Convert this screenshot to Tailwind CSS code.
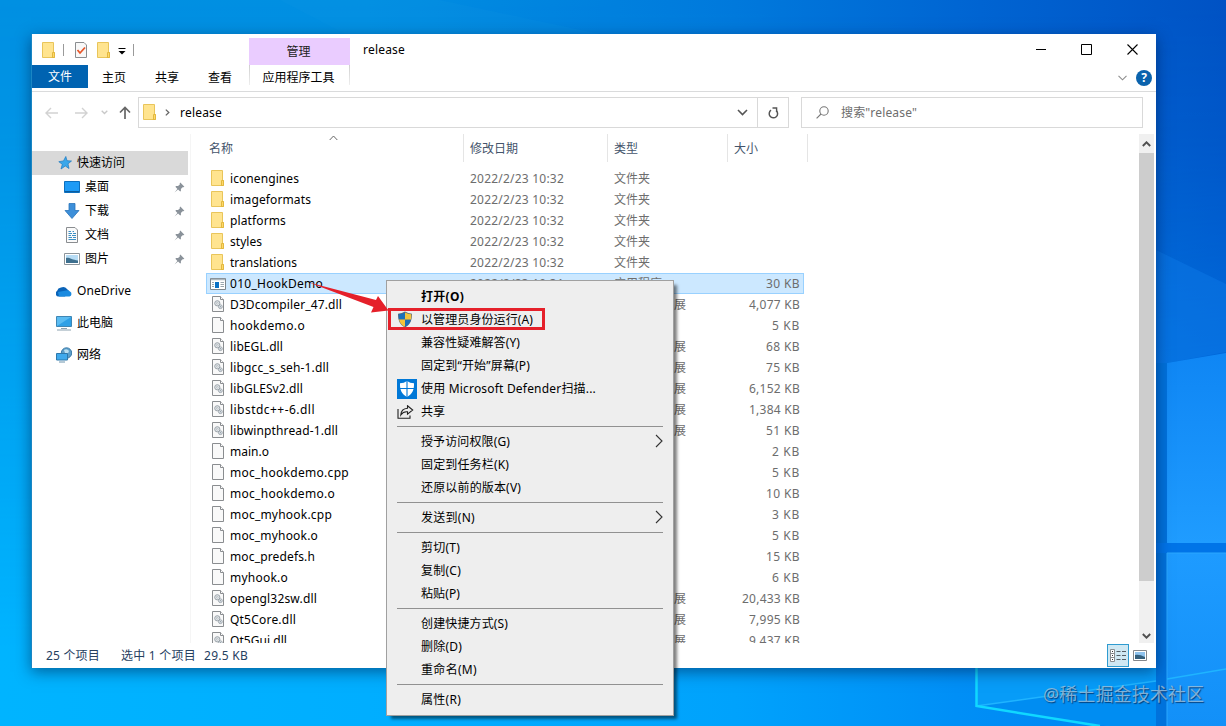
<!DOCTYPE html>
<html lang="zh-CN">
<head>
<meta charset="utf-8">
<title>release</title>
<script src="https://cdn.jsdelivr.net/npm/@tailwindcss/browser@4"></script>
</head>
<body class="relative w-[1226px] h-[726px] overflow-hidden bg-[#0090f0] font-['Noto_Sans','Noto_Sans_CJK_SC',sans-serif] text-[12px] leading-[20px] text-black">

<!-- desktop wallpaper -->
<svg class="absolute inset-0" width="1226" height="726" viewBox="0 0 1226 726">
  <defs>
    <linearGradient id="top" x1="0" x2="1" y1="0" y2="0"><stop offset="0" stop-color="#0090e2"/><stop offset=".3" stop-color="#008fe2"/><stop offset=".6" stop-color="#0079dc"/><stop offset=".8" stop-color="#0064d2"/><stop offset="1" stop-color="#0052c4"/></linearGradient>
    <linearGradient id="bot" x1="0" x2="1" y1="0" y2="0"><stop offset="0" stop-color="#00b4ff"/><stop offset=".3" stop-color="#00aeff"/><stop offset=".6" stop-color="#00a2fc"/><stop offset=".78" stop-color="#008ff6"/><stop offset="1" stop-color="#0080f0"/></linearGradient>
    <linearGradient id="fade" x1="0" x2="0" y1="0" y2="1"><stop offset="0" stop-color="#000"/><stop offset=".2" stop-color="#222"/><stop offset=".9" stop-color="#fff"/></linearGradient>
    <mask id="m"><rect width="1226" height="726" fill="url(#fade)"/></mask>
    <linearGradient id="pane" x1="0" x2="0" y1="0" y2="1"><stop offset="0" stop-color="#0f86f4"/><stop offset="1" stop-color="#1f9cff"/></linearGradient>
    <linearGradient id="pane2" x1="0" x2="0" y1="0" y2="1"><stop offset="0" stop-color="#1e9bff"/><stop offset="1" stop-color="#1290f8"/></linearGradient>
  </defs>
  <rect width="1226" height="726" fill="url(#top)"/>
  <rect width="1226" height="726" fill="url(#bot)" mask="url(#m)"/>
  <path d="M280 0L345 34H600L440 0Z" fill="#18a0ea" opacity=".12"/>
  <path d="M1156 250L1226 284V352L1167 363H1156Z" fill="#1080ee" opacity=".35"/>
  <path d="M1167 363L1226 353V543H1167Z" fill="url(#pane)"/>
  <path d="M1156 363H1167V726H1156Z" fill="#0072dc"/>
  <path d="M1156 543H1226V553H1156Z" fill="#0074e8"/>
  <path d="M1167 553H1226V726H1167Z" fill="url(#pane2)"/>
  <path d="M1167 553V726M1167 553H1226" stroke="#2ba8ff" fill="none"/>
  <path d="M976 660H1156V726H1110L976 706Z" fill="#079cf8"/>
  <path d="M976 706L1156 681V726H1110Z" fill="#008df2"/>
  <path d="M976 706L1156 681M1167 679L1226 669" stroke="#1fb4ff" stroke-width="1.500" fill="none"/>
  <path d="M976.500 660V706L1100 726" stroke="#10d8ff" stroke-width="2.500" fill="none"/>
</svg>

<!-- shared symbols -->
<svg class="absolute" width="0" height="0">
  <symbol id="folder" viewBox="0 0 14 16"><path d="M.5.500H11.500V10.500H12.500V15.500H.5Z" fill="#ffe48f" stroke="#e9c55a"/><path d="M10.500 15V10.500H12.500V15.500H10Z" fill="#ffd968" stroke="#e2b840"/></symbol>
  <symbol id="file" viewBox="0 0 13 16"><path d="M.5.500H8.500L11.500 3.500V15.500H.5Z" fill="#f9f9f9" stroke="#8a8d90"/><path d="M8.500.500V3.500H11.500" fill="#fff" stroke="#8a8d90"/></symbol>
  <symbol id="dll" viewBox="0 0 13 16"><path d="M.5.500H8.500L11.500 3.500V15.500H.5Z" fill="#f9f9f9" stroke="#8a8d90"/><path d="M8.500.500V3.500H11.500" fill="#fff" stroke="#8a8d90"/><circle cx="5.300" cy="7.300" r="2.600" fill="#e4e9ed" stroke="#9aa2a8" stroke-width="1"/><circle cx="5.300" cy="7.300" r=".9" fill="#fff" stroke="#9aa2a8" stroke-width=".6"/><circle cx="8.400" cy="10.700" r="1.900" fill="#dfe6ec" stroke="#9aa2a8" stroke-width=".9"/><circle cx="8.400" cy="10.700" r=".6" fill="#8f979d"/></symbol>
  <symbol id="exe" viewBox="0 0 16 12"><path d="M.5.500H15.500V11.500H.5Z" fill="#fff" stroke="#7d868d"/><path d="M1 1.500H15" stroke="#aeb7bd" stroke-width="1.500"/><path d="M5 4H9V10H5Z" fill="#0a70c4"/><path d="M2 4.500H4M2 6.500H4M2 8.500H4M10.500 4.500H14M10.500 6.500H14M10.500 8.500H14" stroke="#9aa6ae"/></symbol>
  <symbol id="pin" viewBox="0 0 11 11"><path d="M6.300.600L10.400 4.700L9.300 5.300L8.600 5.200L6.900 7V8.900L6.200 9.600L4.100 7.500L.5 10.500L3.400 6.900L1.400 4.800L2.100 4.100H4L5.800 2.400L5.700 1.500Z" fill="#8a929a"/></symbol>
</svg>

<!-- explorer window -->
<main class="absolute left-[31px] top-[34px] flex h-[634px] w-[1125px] flex-col border-l border-[#1a86c4] bg-white shadow-[0_4px_14px_rgba(0,20,60,0.5)]">

  <!-- title bar and ribbon tabs -->
  <header class="flex h-[58px] flex-none border-b border-[#dadbdc]">
    <div class="flex w-[217px] flex-col">
      <div class="flex h-[31px] items-center pl-[10px]">
        <svg width="14" height="16"><use href="#folder"/></svg>
        <i class="ml-[7px] h-[12px] w-px bg-[#9a9a9a]"></i>
        <svg class="ml-[11px]" width="13" height="16" viewBox="0 0 13 16"><path d="M.5.500H9L11.500 3V15.500H.5Z" fill="#f8f8f8" stroke="#8a8d90"/><path d="M2.500 8L5 11L10 5.500" fill="none" stroke="#e8562a" stroke-width="1.800"/></svg>
        <svg class="ml-[9px]" width="14" height="16"><use href="#folder"/></svg>
        <svg class="ml-[7px] mt-[3px]" width="8" height="7"><path d="M.5 .5H7.500" stroke="#000"/><path d="M.5 3H7.500L4 6.500Z"/></svg>
        <i class="ml-[7px] h-[12px] w-px bg-[#9a9a9a]"></i>
      </div>
      <nav class="flex h-[23px]">
        <b class="w-[56px] bg-[#0063b1] text-center font-normal leading-[24px] text-white">文件</b>
        <span class="ml-[14px] leading-[26px]">主页</span>
        <span class="ml-[29px] leading-[26px]">共享</span>
        <span class="ml-[29px] leading-[26px]">查看</span>
      </nav>
    </div>
    <div class="mt-[4px] w-[101px] text-center">
      <div class="h-[27px] bg-[#eaccff] pr-[2px] leading-[27px] text-[#222]">管理</div>
      <div class="flex h-[20px] justify-between">
        <i class="w-px bg-linear-to-b from-[#cfcfcf] to-[#eeeeee]"></i><span class="pr-[2px] leading-[26px]">应用程序工具</span><i class="w-px bg-linear-to-b from-[#cfcfcf] to-[#eeeeee]"></i>
      </div>
    </div>
    <span class="ml-[13px] mt-[6px]"><span data-w="42">release</span></span>
    <div class="ml-auto flex flex-col">
      <div class="flex h-[31px] items-center gap-[35px] pr-[18px]">
        <svg width="10" height="11"><path d="M0 5.500H10" stroke="#000"/></svg>
        <svg width="11" height="11"><path d="M.5 .5H10.500V10.500H.5Z" fill="none" stroke="#000"/></svg>
        <svg width="11" height="11"><path d="M.5 .5L10.500 10.500M10.500 .5L.5 10.500" stroke="#000" stroke-width="1.100"/></svg>
      </div>
      <div class="flex h-[26px] items-center justify-end gap-[9px] pr-[4px]">
        <svg width="9" height="6"><path d="M.5 .8L4.500 4.800L8.500 .8" fill="none" stroke="#8d8d8d" stroke-width="1.100"/></svg>
        <b class="flex size-[16px] items-center justify-center rounded-full bg-[#0b63ad] text-[12px] text-white">?</b>
      </div>
    </div>
  </header>

  <!-- address row -->
  <div class="flex h-[42px] flex-none items-start pt-[5px]">
    <div class="flex h-[31px] w-[106px] items-center pl-[13px]">
      <svg width="13" height="12" fill="none" stroke="#d2d2d2" stroke-width="1.400"><path d="M13 6H1M6 1L1 6L6 11"/></svg>
      <svg class="ml-[17px]" width="13" height="12" fill="none" stroke="#d2d2d2" stroke-width="1.400"><path d="M0 6H12M7 1L12 6L7 11"/></svg>
      <svg class="ml-[13px]" width="7" height="5" fill="none" stroke="#c8c8c8" stroke-width="1.300"><path d="M.7 .7L3.500 3.500L6.300 .7"/></svg>
      <svg class="ml-[11px]" width="12" height="13" fill="none" stroke="#666" stroke-width="1.700"><path d="M6 13V1.500M1 6.500L6 1.500L11 6.500"/></svg>
    </div>
    <div class="flex h-[31px] w-[651px] items-center border border-[#d9d9d9] pl-[4px]">
      <svg class="mb-px" width="14" height="16"><use href="#folder"/></svg>
      <svg class="ml-[8px]" width="5" height="7" fill="none" stroke="#666" stroke-width="1.300"><path d="M.8 .6L3.800 3.500L.8 6.400"/></svg>
      <span class="ml-[10px]"><span data-w="42">release</span></span>
      <svg class="ml-auto mr-[9px]" width="11" height="7" fill="none" stroke="#555" stroke-width="1.600"><path d="M1 1L5.500 5.500L10 1"/></svg>
      <div class="flex h-full w-[31px] items-center justify-center border-l border-[#d9d9d9]">
        <svg width="11" height="12" viewBox="0 0 11 12" fill="none" stroke="#555" stroke-width="1.500"><path d="M8.300 3.600A4.200 4.200 0 1 1 3 3.200"/><path d="M4.500 1H8.600V4.800" stroke-width="1.400"/></svg>
      </div>
    </div>
    <div class="ml-[12px] flex h-[31px] w-[342px] items-center border border-[#d9d9d9] pl-[14px] text-[#6d6d6d]">
      <svg class="mb-px" width="13" height="13" fill="none" stroke="#777" stroke-width="1.100"><circle cx="8" cy="5" r="4.200"/><path d="M5 8L.6 12.400"/></svg>
      <span class="ml-[12px]"><span data-w="76">搜索"release"</span></span>
    </div>
  </div>

  <!-- navigation pane and file list -->
  <div class="flex h-[509px] flex-none">
    <aside class="w-[159px] flex-none border-r border-[#f5f5f5] pt-[17px]">
      <div class="flex h-[24px] w-[156px] items-center bg-[#d9d9d9] pl-[26px]">
        <svg width="14" height="14" viewBox="0 0 14 14"><path d="M7.800.500L9 4.700L13.500 5L10 7.800L11 12.500L7.300 10L3 13L4.300 8.300L.8 5.700L5.500 4.900Z" fill="#3aa7ea" stroke="#1b78c0" stroke-width=".7"/></svg>
        <span class="ml-[5px]">快速访问</span>
      </div>
      <div class="flex h-[24px] w-[156px] items-center pl-[32px] pr-[3px]">
        <svg width="16" height="12"><path d="M.5 .5H15.500V11.500H.5Z" fill="#1e9bf6" stroke="#0c6fbe"/><path d="M1 10.500H15" stroke="#0b5c9e"/></svg>
        <span class="ml-[5px]">桌面</span><svg class="ml-auto" width="11" height="11"><use href="#pin"/></svg>
      </div>
      <div class="flex h-[24px] w-[156px] items-center pl-[32px] pr-[3px]">
        <svg width="16" height="16"><path d="M5 .5H11V7.500H15L8 15.500L1 7.500H5Z" fill="#3d8fd9" stroke="#2a74ba" stroke-width=".8"/></svg>
        <span class="ml-[5px]">下载</span><svg class="ml-auto" width="11" height="11"><use href="#pin"/></svg>
      </div>
      <div class="flex h-[24px] w-[156px] items-center pl-[34px] pr-[3px]">
        <svg width="13" height="16"><path d="M.5 .5H9L11.500 3V15.500H.5Z" fill="#fafafa" stroke="#8a8d90"/><path d="M2.500 4.500H5M6.500 4.500H8M2.500 6.500H6M7 6.500H10M2.500 8.500H5M6 8.500H10M2.500 10.500H6M7 10.500H10M2.500 12.500H10" stroke="#3c8fc4"/></svg>
        <span class="ml-[6px]">文档</span><svg class="ml-auto" width="11" height="11"><use href="#pin"/></svg>
      </div>
      <div class="flex h-[24px] w-[156px] items-center pl-[32px] pr-[3px]">
        <svg width="16" height="12"><path d="M.5 .5H15.500V11.500H.5Z" fill="#fff" stroke="#8d959b"/><path d="M2 2H14V10H2Z" fill="#b7dcf5"/><path d="M2 5C5 4 8 7 14 7.500V10H2Z" fill="#3d6f8e"/></svg>
        <span class="ml-[5px]">图片</span><svg class="ml-auto" width="11" height="11"><use href="#pin"/></svg>
      </div>
      <div class="mt-[8px] flex h-[24px] items-center pl-[24px]">
        <svg width="16" height="11" viewBox="0 0 16 11"><path d="M3 10.500A3 3 0 0 1 1 5A5 5 0 0 1 5 1.500A5 5 0 0 1 11 3L13 5L9 10.500Z" fill="#0a63b8"/><path d="M3 10.500L2 6L10 4.500A4 4 0 0 1 14 5.500A2.700 2.700 0 0 1 13.500 10.500Z" fill="#1b8be0"/></svg>
        <span class="ml-[5px]"><span data-w="54">OneDrive</span></span>
      </div>
      <div class="mt-[8px] flex h-[24px] items-center pl-[24px]">
        <svg width="16" height="15"><path d="M.5 .5H15.500V10.500H.5Z" fill="#5bbcf2" stroke="#3f86b4"/><path d="M1 10L15 1V10Z" fill="#2fa0e6"/><path d="M5 12.500H11M1 14H15" stroke="#8ba1b0"/></svg>
        <span class="ml-[5px]">此电脑</span>
      </div>
      <div class="mt-[8px] flex h-[24px] items-center pl-[24px]">
        <svg width="16" height="16"><circle cx="10.500" cy="6" r="5.200" fill="#5d9fcb" stroke="#397aa8"/><path d="M8 3Q11 1 13 4Q12 8 9 6Z" fill="#b9def0"/><path d="M.5 6.500H11.500V13H.5Z" fill="#3fa9ec" stroke="#2d78ac"/><path d="M3 15H9" stroke="#6c94ad"/></svg>
        <span class="ml-[5px]">网络</span>
      </div>
    </aside>

    <section class="flex-1 overflow-hidden">
      <div class="flex h-[28px] items-center text-[#44546b]">
        <div class="relative flex h-full w-[273px] items-center border-r border-[#e5e5e5] pl-[18px] leading-[28px] pt-[2px]">名称
          <svg class="absolute left-[138px] top-[1px]" width="9" height="6" fill="none" stroke="#666"><path d="M.7 5L4.500 1L8.300 5"/></svg>
        </div>
        <div class="h-full w-[144px] border-r border-[#e5e5e5] pl-[6px] leading-[30px]">修改日期</div>
        <div class="h-full w-[120px] border-r border-[#e5e5e5] pl-[6px] leading-[30px]">类型</div>
        <div class="h-full w-[80px] border-r border-[#e5e5e5] pl-[6px] leading-[30px]">大小</div>
      </div>
      <div id="list" class="pl-[15px] pt-[6px]"></div>
    </section>

    <div class="mr-[2px] flex w-[15px] flex-col items-center bg-[#f0f0f0]">
      <svg class="mt-[7px]" width="9" height="6" fill="none" stroke="#505050" stroke-width="1.900"><path d="M.8 5L4.500 1.300L8.200 5"/></svg>
      <div class="mt-[6px] h-[428px] w-full bg-[#cdcdcd]"></div>
      <svg class="mt-[52px]" width="9" height="6" fill="none" stroke="#505050" stroke-width="1.900"><path d="M.8 1L4.500 4.700L8.200 1"/></svg>
    </div>
  </div>

  <!-- status bar -->
  <footer class="flex h-[25px] flex-none items-center pl-[14px] text-[#26405f]">
    <span class="w-[75px]"><span data-w="54">25 个项目</span></span>
    <span class="w-[83px]"><span data-w="75">选中 1 个项目</span></span>
    <span><span data-w="44">29.5 KB</span></span>
    <div class="ml-auto flex items-center gap-[4px] pr-[9px]">
      <div class="flex h-[23px] w-[22px] items-center justify-center border border-[#2f9bd0] bg-[#cfe8f3]">
        <svg width="17" height="13"><path d="M.5 .5H4.500V12.500H.5ZM.5 4.500H4.500M.5 8.500H4.500" fill="#fff" stroke="#8a8d90"/><path d="M2 2.500H3M2 6.500H3M2 10.500H3" stroke="#333"/><path d="M6.500 2.500H10.500M12 2.500H16M6.500 6.500H10.500M12 6.500H16M6.500 10.500H10.500M12 10.500H16" stroke="#555f66"/></svg>
      </div>
      <svg width="14" height="11"><path d="M.5 .5H13.500V10.500H.5Z" fill="#fff" stroke="#84878c"/><path d="M2 2H12V9H2Z" fill="#8fc3ee"/><path d="M2 5Q6 4 12 7V9H2Z" fill="#345f7c"/></svg>
    </div>
  </footer>
</main>

<!-- context menu -->
<div id="menu" class="absolute left-[386px] top-[280px] h-[436px] w-[288px] border border-[#a0a0a0] bg-[#eeeeee] pt-[4px] shadow-[4px_4px_3px_-1px_rgba(0,0,0,0.5)]"></div>

<!-- annotation -->
<div class="absolute left-[388px] top-[308px] h-[22px] w-[157px] border-[3px] border-[#e5202a]"></div>
<svg class="absolute left-0 top-0" width="400" height="330"><path d="M309 282.500L376 300L378 296L388.500 310.500L371 312.500L373.500 307Z" fill="#e5202a"/></svg>

<div class="absolute left-[1043px] top-[681px] whitespace-nowrap text-[18px] leading-[26px] text-[#a9c6dc]/75 [text-shadow:1px_1px_1px_rgba(0,40,90,0.75)]"><span data-w="161">@稀土掘金技术社区</span></div>

<script>
const D = '应用程序扩展';
const rows = [
  ['folder','iconengines',69,'文件夹',''],['folder','imageformats',81,'文件夹',''],['folder','platforms',56,'文件夹',''],
  ['folder','styles',32,'文件夹',''],['folder','translations',67,'文件夹',''],['exe','010_HookDemo',93,'应用程序','30 KB'],
  ['dll','D3Dcompiler_47.dll',112,D,'4,077 KB'],['file','hookdemo.o',75,'O 文件','5 KB'],['dll','libEGL.dll',53,D,'68 KB'],
  ['dll','libgcc_s_seh-1.dll',99,D,'75 KB'],['dll','libGLESv2.dll',73,D,'6,152 KB'],['dll','libstdc++-6.dll',85,D,'1,384 KB'],
  ['dll','libwinpthread-1.dll',108,D,'51 KB'],['file','main.o',39,'O 文件','2 KB'],['file','moc_hookdemo.cpp',119,'CPP 文件','5 KB'],
  ['file','moc_hookdemo.o',105,'O 文件','10 KB'],['file','moc_myhook.cpp',102,'CPP 文件','3 KB'],['file','moc_myhook.o',88,'O 文件','5 KB'],
  ['file','moc_predefs.h',85,'H 文件','15 KB'],['file','myhook.o',58,'O 文件','6 KB'],['dll','opengl32sw.dll',87,D,'20,433 KB'],
  ['dll','Qt5Core.dll',66,D,'7,995 KB'],['dll','Qt5Gui.dll',57,D,'9,437 KB']
];
const dims = {folder:[14,16,'ml-[5px] mr-[5px] mb-px'],exe:[16,12,'ml-[4px] mr-[4px]'],file:[13,16,'ml-[6px] mr-[5px] mb-px'],dll:[13,16,'ml-[6px] mr-[5px] mb-px']};
document.getElementById('list').innerHTML = rows.map(([k,n,w,t,s]) => {
  const [iw,ih,m] = dims[k], sel = k === 'exe';
  return `<div class="flex h-[21px] w-[598px] items-center text-[#6d6d6d] ${sel ? 'bg-[#cce8ff] shadow-[inset_0_0_0_1px_#99d1ff]' : ''}">
    <div class="flex w-[264px] items-center text-black"><svg class="${m}" width="${iw}" height="${ih}"><use href="#${k}"/></svg><span data-w="${w}">${n}</span></div>
    <div class="w-[144px]"><span data-w="94">2022/2/23 10:3${sel ? 1 : 2}</span></div>
    <div class="w-[100px]">${t}</div>
    <div class="ml-auto pr-[4px]"><span data-w="${s ? {4:28,5:34,8:51,9:58}[s.length] : ''}">${s}</span></div></div>`;
}).join('');

const shield = `<svg class="ml-[10px]" width="16" height="17" viewBox="0 0 16 17"><path d="M8 .5Q11 2.500 15 2.700C15 9 13.500 13.500 8 16.500C2.500 13.500 1 9 1 2.700Q5 2.500 8 .5Z" fill="#5a6a78"/><path d="M8 1.500V8.500H2C1.700 7 1.700 5 1.700 3.300Q5 3.200 8 1.500ZM8 8.500H14C13.200 12 11.500 14 8 15.800Z" fill="#1d6fb8"/><path d="M8 1.500Q11 3.200 14.300 3.300C14.300 5 14.300 7 14 8.500H8ZM8 8.500V15.800C4.500 14 2.800 12 2 8.500Z" fill="#f5c33b"/></svg>`;
const defender = `<svg class="ml-[10px]" width="20" height="20" viewBox="0 0 20 20"><path d="M0 0H20V20H0Z" fill="#0078d7"/><path d="M10 2Q13 4.200 17 4.300C17.200 11 15.500 15 10 18C4.500 15 2.800 11 3 4.300Q7 4.200 10 2Z" fill="#fff"/><path d="M10 2V18M2.500 9.500H17.500" stroke="#0078d7" stroke-width="1.100"/></svg>`;
const share = `<svg class="ml-[10px]" width="17" height="14" viewBox="0 0 17 14" fill="none" stroke="#222" stroke-width="1.100"><path d="M1 4V13.200H13V10.500"/><path d="M10.500 .8L15.700 5L10.500 9.200V6.800C7.500 6.500 5.500 7.500 3.800 10C4 6 6.500 3.500 10.500 3.200Z"/></svg>`;
const items = [
  ['打开(O)',43],['以管理员身份运行(A)',112,shield],['兼容性疑难解答(Y)',99],['固定到“开始”屏幕(P)',109],['使用 Microsoft Defender扫描...',175,defender],['共享',24,share],0,
  ['授予访问权限(G)',89,'>'],['固定到任务栏(K)',88],['还原以前的版本(V)',100],0,['发送到(N)',54,'>'],0,
  ['剪切(T)',39],['复制(C)',40],['粘贴(P)',39],0,['创建快捷方式(S)',87],['删除(D)',41],['重命名(M)',56],0,['属性(R)',40]
];
document.getElementById('menu').innerHTML = items.map((it, i) => {
  if (!it) return '<div class="mx-[10px] flex h-[7px] items-center"><i class="h-px w-full bg-[#919191]"></i></div>';
  const [t,w,x] = it;
  return `<div class="flex h-[23px] items-center whitespace-nowrap ${i ? '' : 'font-bold'}"><div class="w-[34px] flex-none">${x && x !== '>' ? x : ''}</div><span data-w="${w}">${t}</span>${x === '>' ? '<svg class="ml-auto mr-[10px] mb-[2px]" width="8" height="14" fill="none" stroke="#333" stroke-width="1.100"><path d="M1 1L7 7L1 13"/></svg>' : ''}</div>`;
}).join('');

function fit() {
  document.querySelectorAll('[data-w]').forEach(e => {
    const w = +e.dataset.w;
    if (!w) return;
    e.style.letterSpacing = '0px';
    e.style.letterSpacing = (w - e.getBoundingClientRect().width) / [...e.textContent].length + 'px';
  });
}
fit();
addEventListener('load', () => { fit(); document.fonts.ready.then(fit); requestAnimationFrame(fit); setTimeout(fit, 50); });
</script>
</body>
</html>
